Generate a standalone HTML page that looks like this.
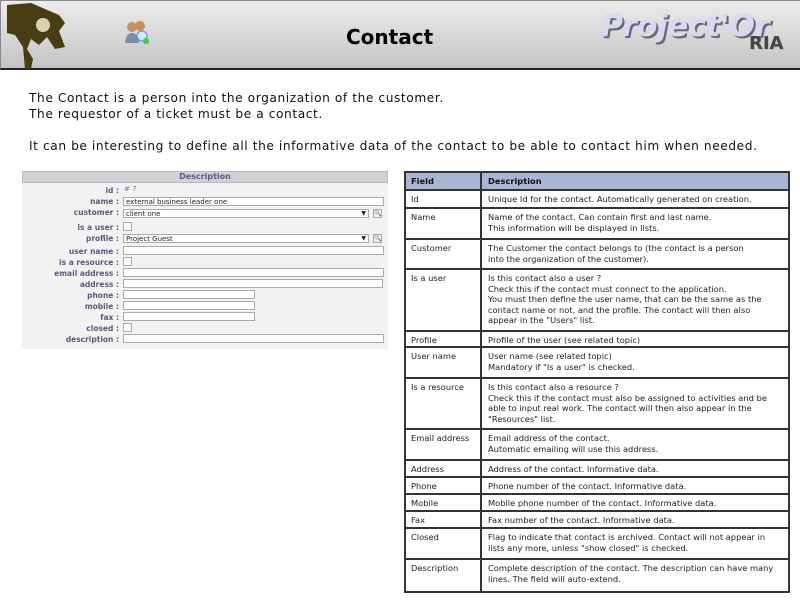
<!DOCTYPE html><html><head><style>
*{margin:0;padding:0;box-sizing:border-box}
body{width:800px;height:600px;background:#fff;position:relative;overflow:hidden;font-family:"DejaVu Sans","Liberation Sans",sans-serif}
.hdr{position:absolute;left:0;top:0;width:800px;height:70px;background:linear-gradient(#ececec,#c4c4c4);border-top:1px solid #888;border-left:1px solid #888;border-bottom:2px solid #222}
.title{position:absolute;left:345px;top:24px;font:bold 20px "DejaVu Sans",sans-serif;color:#000}
.intro{position:absolute;left:29px;font-size:12.2px;color:#111;letter-spacing:0.58px}
.form{position:absolute;left:22px;top:171px;width:366px;height:178px;background:#f2f2f2}
.fh{height:12px;background:#d0d0d6;border:1px solid #bbb;text-align:center;font:bold 8px "DejaVu Sans",sans-serif;color:#5a5a80;line-height:10px}
.lb{position:absolute;right:269px;font:bold 7.5px "DejaVu Sans",sans-serif;color:#5a5a80;white-space:nowrap}
.in{position:absolute;left:101px;height:9px;background:#fff;border:1px solid #aaa;font:7px "DejaVu Sans",sans-serif;line-height:8px;padding-left:2px;color:#222}
.cb{position:absolute;left:101px;width:9px;height:9px;background:#fff;border:1px solid #aaa}
.btn{position:absolute;width:9px;height:9px;border:1px solid #aaa;background:#eee;font-size:6px;text-align:center;line-height:8px}
.tbl{position:absolute;left:404px;top:171px;width:386px;border:2px solid #333;border-bottom:none}
.r{position:relative;border-bottom:2px solid #333;font:8.3px "DejaVu Sans",sans-serif;color:#222;line-height:10.5px}
.r>div{position:absolute;top:3px}
.r .a{left:5px}.r .b{left:82px;width:290px}
.r::after{content:"";position:absolute;left:74px;top:0;bottom:0;border-left:2px solid #333}
.h{background:#a9b5d2;font-weight:bold;color:#111}
</style></head><body>
<div class="hdr">
<svg style="position:absolute;left:2px;top:0" width="70" height="70"><path d="M4 4 L28 2 L56 14 L62 22 L56 30 L62 46 L52 48 L44 36 L36 44 L28 38 L24 48 L30 58 L28 68 L22 68 L20 46 L12 34 L4 32Z" fill="#4a3d14"/><circle cx="40" cy="24" r="7" fill="#d8d0b0"/></svg>
<svg style="position:absolute;left:122px;top:18px" width="30" height="26"><circle cx="9" cy="8" r="5" fill="#c89060"/><circle cx="17" cy="7" r="5" fill="#c89060"/><path d="M2 24 Q3 14 9 14 Q15 14 16 24Z" fill="#7a8ea8"/><circle cx="19" cy="17" r="5" fill="#cfe8f8" stroke="#4a90c0"/><circle cx="23" cy="22" r="3" fill="#4c4"/></svg>
<div class="title">Contact</div>
<div style="position:absolute;left:600px;top:8px;font:italic bold 30px 'DejaVu Sans',sans-serif;color:#d8d8f0;text-shadow:2px 2px 0 #667">Project'Or</div>
<div style="position:absolute;left:748px;top:32px;font:bold 18px 'DejaVu Sans',sans-serif;color:#444;text-shadow:1px 1px 0 #bbb">RIA</div>
</div>
<div class="intro" style="top:91px">The Contact is a person into the organization of the customer.</div>
<div class="intro" style="top:107px">The requestor of a ticket must be a contact.</div>
<div class="intro" style="top:139px">It can be interesting to define all the informative data of the contact to be able to contact him when needed.</div>
<div class="form"><div class="fh">Description</div>
<div class="lb" style="top:15px">id :</div><div style="position:absolute;left:102px;top:14px;font-size:7px;color:#777"># 7</div>
<div class="lb" style="top:26px">name :</div><div class="in" style="top:26px;width:261px">external business leader one</div>
<div class="lb" style="top:37px">customer :</div><div class="in" style="top:38px;width:246px">client one<span style="position:absolute;right:2px;font-size:6px">▼</span></div><div class="btn" style="left:351px;top:38px">🔍</div>
<div class="lb" style="top:52px">is a user :</div><div class="cb" style="top:51px"></div>
<div class="lb" style="top:63px">profile :</div><div class="in" style="top:63px;width:246px">Project Guest<span style="position:absolute;right:2px;font-size:6px">▼</span></div><div class="btn" style="left:351px;top:63px">🔍</div>
<div class="lb" style="top:76px">user name :</div><div class="in" style="top:75px;width:261px"></div>
<div class="lb" style="top:87px">is a resource :</div><div class="cb" style="top:86px"></div>
<div class="lb" style="top:98px">email address :</div><div class="in" style="top:97px;width:261px"></div>
<div class="lb" style="top:109px">address :</div><div class="in" style="top:108px;width:260px"></div>
<div class="lb" style="top:120px">phone :</div><div class="in" style="top:119px;width:132px"></div>
<div class="lb" style="top:131px">mobile :</div><div class="in" style="top:130px;width:132px"></div>
<div class="lb" style="top:142px">fax :</div><div class="in" style="top:141px;width:132px"></div>
<div class="lb" style="top:153px">closed :</div><div class="cb" style="top:152px"></div>
<div class="lb" style="top:164px">description :</div><div class="in" style="top:163px;width:261px"></div>
</div>
<div class="tbl">
<div class="r h" style="height:18px"><div class="a">Field</div><div class="b">Description</div></div>
<div class="r" style="height:18px"><div class="a">Id</div><div class="b">Unique Id for the contact. Automatically generated on creation.</div></div>
<div class="r" style="height:31px"><div class="a">Name</div><div class="b">Name of the contact. Can contain first and last name.<br>This information will be displayed in lists.</div></div>
<div class="r" style="height:30px"><div class="a">Customer</div><div class="b">The Customer the contact belongs to (the contact is a person<br>into the organization of the customer).</div></div>
<div class="r" style="height:62px"><div class="a">Is a user</div><div class="b">Is this contact also a user ?<br>Check this if the contact must connect to the application.<br>You must then define the user name, that can be the same as the contact name or not, and the profile. The contact will then also appear in the "Users" list.</div></div>
<div class="r" style="height:16px"><div class="a">Profile</div><div class="b">Profile of the user (see related topic)</div></div>
<div class="r" style="height:31px"><div class="a">User name</div><div class="b">User name (see related topic)<br>Mandatory if "Is a user" is checked.</div></div>
<div class="r" style="height:51px"><div class="a">Is a resource</div><div class="b">Is this contact also a resource ?<br>Check this if the contact must also be assigned to activities and be able to input real work. The contact will then also appear in the "Resources" list.</div></div>
<div class="r" style="height:31px"><div class="a">Email address</div><div class="b">Email address of the contact.<br>Automatic emailing will use this address.</div></div>
<div class="r" style="height:17px"><div class="a">Address</div><div class="b">Address of the contact. Informative data.</div></div>
<div class="r" style="height:17px"><div class="a">Phone</div><div class="b">Phone number of the contact. Informative data.</div></div>
<div class="r" style="height:17px"><div class="a">Mobile</div><div class="b">Mobile phone number of the contact. Informative data.</div></div>
<div class="r" style="height:17px"><div class="a">Fax</div><div class="b">Fax number of the contact. Informative data.</div></div>
<div class="r" style="height:31px"><div class="a">Closed</div><div class="b">Flag to indicate that contact is archived. Contact will not appear in lists any more, unless "show closed" is checked.</div></div>
<div class="r" style="height:33px"><div class="a">Description</div><div class="b">Complete description of the contact. The description can have many lines. The field will auto-extend.</div></div>
</div>
</body></html>
